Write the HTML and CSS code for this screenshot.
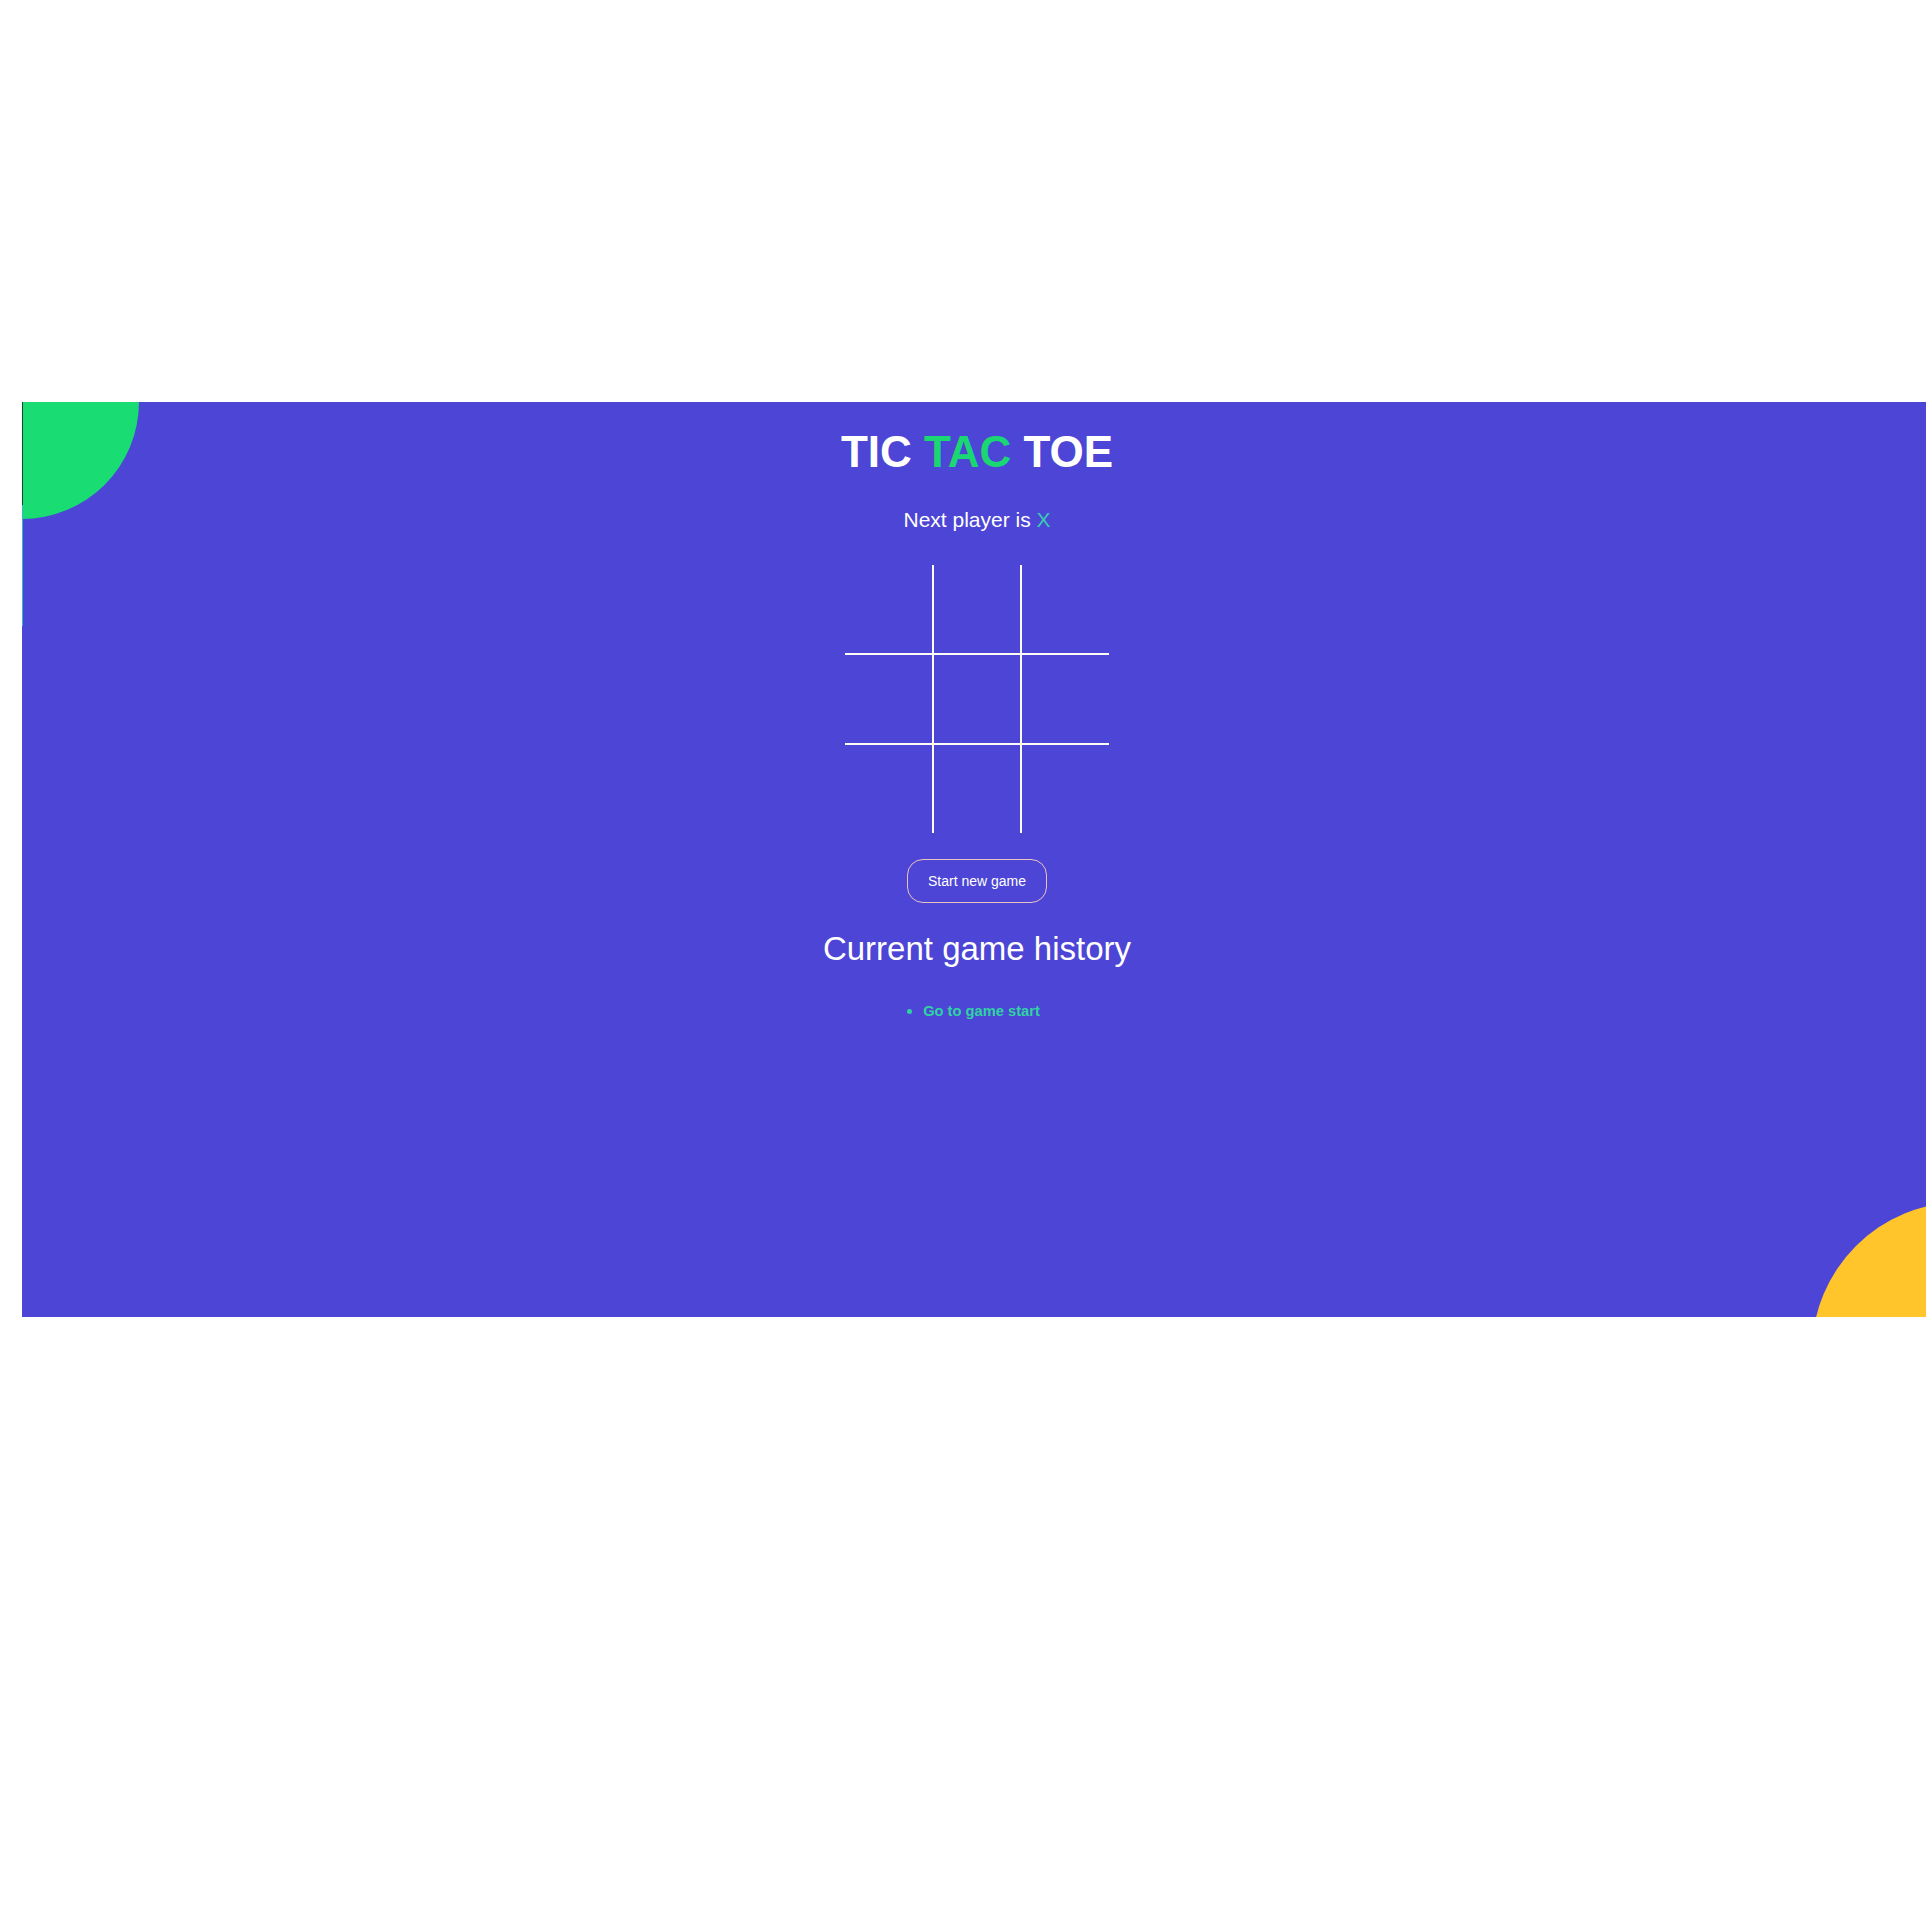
FILE: index.html
```html
<!DOCTYPE html>
<html lang="en">
<head>
<meta charset="utf-8">
<title>Tic Tac Toe</title>
<link rel="stylesheet" href="styles.css">
</head>
<body>
<div class="page">
  <main class="game">
    <span class="blob blob-green"></span>
    <span class="blob blob-yellow"></span>
    <span class="edge"></span>
    <div class="content">
      <h1 class="title">TIC <span class="accent">TAC</span> TOE</h1>
      <p class="status">Next player is <span class="player">X</span></p>
      <div class="board">
        <button class="cell"></button><button class="cell"></button><button class="cell"></button>
        <button class="cell"></button><button class="cell"></button><button class="cell"></button>
        <button class="cell"></button><button class="cell"></button><button class="cell"></button>
      </div>
      <button class="restart">Start new game</button>
      <h2 class="history-title">Current game history</h2>
      <ul class="history">
        <li class="history-item"><span class="dot"></span><span class="move">Go to game start</span></li>
      </ul>
    </div>
  </main>
</div>
</body>
</html>
```

FILE: styles.css
```css
* { box-sizing: border-box; }

html, body {
  margin: 0;
  padding: 0;
  background: #ffffff;
  font-family: "Liberation Sans", Arial, sans-serif;
}

.page {
  padding: 402px 4px 0 22px;
  height: 1930px;
}

.game {
  position: relative;
  height: 915px;
  background: #4c45d6;
  overflow: hidden;
}

.blob {
  position: absolute;
  border-radius: 50%;
}

.blob-green {
  left: -117px;
  top: -117px;
  width: 234px;
  height: 234px;
  background: #19dc73;
}

.blob-yellow {
  right: -186px;
  bottom: -185px;
  width: 300px;
  height: 300px;
  background: #ffc52a;
}

.edge {
  position: absolute;
  left: 0;
  top: 0;
  width: 1px;
  height: 224px;
  background: linear-gradient(#0b4a2a 0, #0b4a2a 103px, #3ab4c6 103px, #3ab4c6 224px);
}

.content {
  position: relative;
  display: flex;
  flex-direction: column;
  align-items: center;
  padding: 25px 0 0 6px;
  color: #ffffff;
}

.title {
  margin: 0;
  font-size: 44px;
  font-weight: 700;
  line-height: normal;
}

.accent { color: #1ad673; }

.status {
  margin: 31px 0 0;
  font-size: 21px;
  line-height: normal;
}

.player { color: #35ccb4; }

.board {
  margin-top: 33px;
  display: grid;
  grid-template-columns: 87px 86px 87px;
  grid-template-rows: repeat(3, 88px);
  gap: 2px;
  background: #fdfbf5;
}

.cell {
  border: none;
  padding: 0;
  margin: 0;
  background: #4c45d6;
}

.restart {
  margin-top: 26px;
  width: 140px;
  height: 44px;
  border: 1px solid #e8c4c0;
  border-radius: 16px;
  background: transparent;
  color: #ffffff;
  font-family: "Liberation Sans", Arial, sans-serif;
  font-size: 14px;
  padding: 0;
}

.history-title {
  margin: 27px 0 0;
  font-size: 33px;
  font-weight: 400;
  line-height: normal;
}

.history {
  list-style: none;
  margin: 35px 0 0;
  padding: 0;
}

.history-item {
  display: flex;
  align-items: center;
  gap: 11px;
  margin-left: -7px;
  color: #2fd3a2;
  font-size: 14.7px;
  font-weight: 700;
  line-height: normal;
}

.dot {
  width: 5px;
  height: 5px;
  border-radius: 50%;
  background: #2fd3a2;
}
```
